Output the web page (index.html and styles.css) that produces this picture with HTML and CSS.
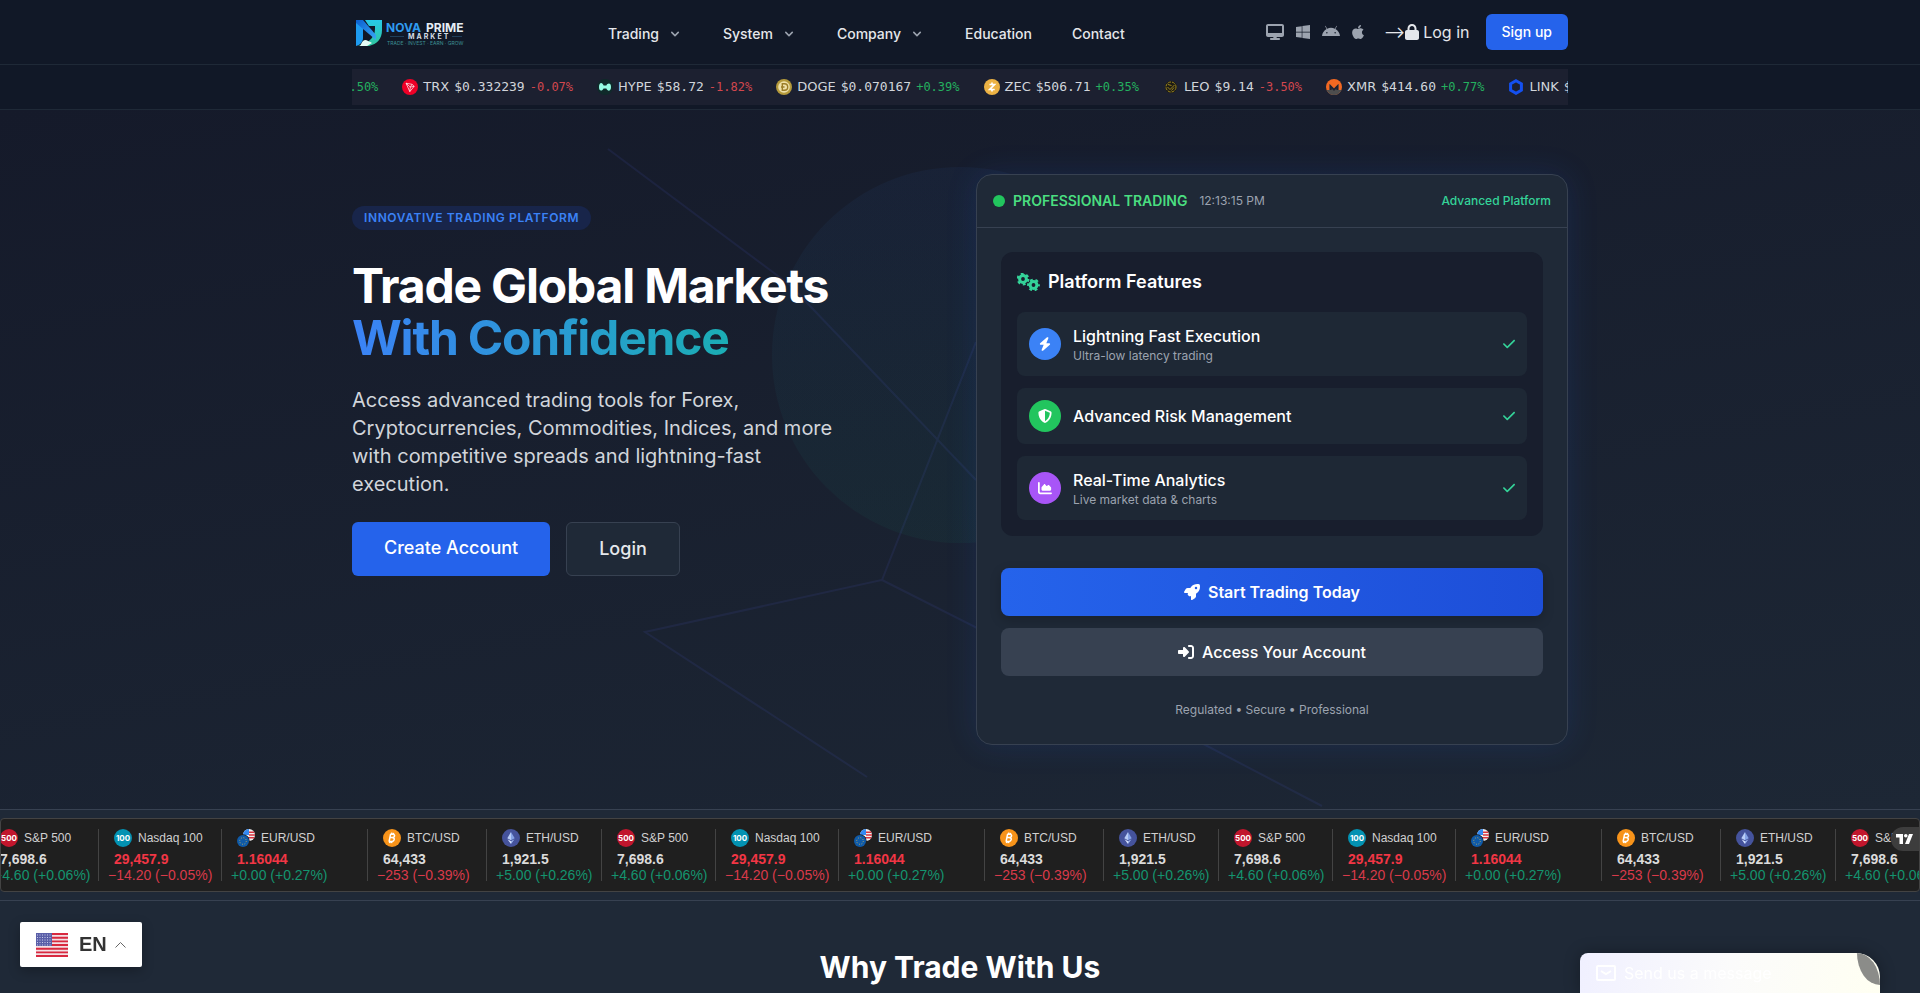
FILE: index.html
```html
<!DOCTYPE html>
<html lang="en">
<head>
  <meta charset="UTF-8" />
  <meta name="viewport" content="width=device-width, initial-scale=1.0"/>
  <title>Nova Prime Market</title>
  <link rel="stylesheet" href="styles.css">
</head>
<body>
  <!-- Shared icons -->
  <svg class="sprite" aria-hidden="true">
    <symbol id="chevron" viewBox="0 0 20 20"><path d="M5.3 7.3a1 1 0 0 1 1.4 0L10 10.6l3.3-3.3a1 1 0 1 1 1.4 1.4l-4 4a1 1 0 0 1-1.4 0l-4-4a1 1 0 0 1 0-1.4z"/></symbol>
    <symbol id="check" viewBox="0 0 448 512"><path d="M438.6 105.4c12.5 12.5 12.5 32.8 0 45.3l-256 256c-12.5 12.5-32.8 12.5-45.3 0l-128-128c-12.5-12.5-12.5-32.8 0-45.3s32.8-12.5 45.3 0L160 338.7 393.4 105.4c12.5-12.5 32.8-12.5 45.3 0z"/></symbol>

    <symbol id="coin-trx" viewBox="0 0 16 16"><circle cx="8" cy="8" r="8" fill="#ef0027"/><path d="M4 4.2l6 1.1 2.2 2-4.4 5.3zM4 4.2l4.3 3.9 3.9-.8M8.3 8.1l-.5 4.5M8.3 8.1L10 5.3" fill="none" stroke="#fff" stroke-width=".7" stroke-linejoin="round"/></symbol>
    <symbol id="coin-hype" viewBox="0 0 16 16"><rect width="16" height="16" rx="8" fill="#0f2a2a"/><path d="M2 8c0-5 3.5-5.2 4.6-1.5h2.8C10.5 4 14 3.5 14 8s-3.5 4.7-4.6 1.5H6.6C5.5 12 2 13 2 8z" fill="#97fce4"/></symbol>
    <symbol id="coin-doge" viewBox="0 0 16 16"><circle cx="8" cy="8" r="8" fill="#b59a3b"/><circle cx="8" cy="8" r="5.8" fill="#eee0a8"/><path d="M6.3 4.8h2.2a3.2 3.2 0 0 1 0 6.4H6.3zM5 8h3.5" fill="none" stroke="#9b7d28" stroke-width="1.4"/></symbol>
    <symbol id="coin-zec" viewBox="0 0 16 16"><circle cx="8" cy="8" r="8" fill="#ecb244"/><path d="M5.5 5.5h5L5.7 10.5h5M8 3.5v2M8 10.5v2" fill="none" stroke="#fff" stroke-width="1.7"/></symbol>
    <symbol id="coin-leo" viewBox="0 0 16 16"><circle cx="8" cy="8" r="6" fill="#1c1b14"/><g fill="none" stroke="#a8901f" stroke-width=".9"><circle cx="8" cy="8" r="5" stroke-dasharray="3 1"/><path d="M4.5 8l2.5 2.5 4.5-4.5M5 5.5l3.5 1M8.5 11.5l2.5-3"/></g></symbol>
    <symbol id="coin-xmr" viewBox="0 0 16 16"><circle cx="8" cy="8" r="8" fill="#f26822"/><path d="M.6 11h3V5l4.4 4.4L12.4 5v6h3A8 8 0 0 1 .6 11z" fill="#4d4d4d"/><path d="M3.6 11V5l4.4 4.4L12.4 5v6h-2V9.5L8 12 5.6 9.5V11z" fill="#1f2130"/></symbol>
    <symbol id="coin-link" viewBox="0 0 16 16"><path d="M8 1.7l5.4 3.1v6.4L8 14.3l-5.4-3.1V4.8z" fill="none" stroke="#1450f0" stroke-width="3"/></symbol>

    <symbol id="sym-btc" viewBox="0 0 18 18"><circle cx="9" cy="9" r="9" fill="#f7931a"/><path d="M7.6 5.2l-1.5 7.3M7.3 5.3h2.6c2.4 0 2.2 3.2-.3 3.3H7M9.5 8.7c2.7 0 2.2 3.7-.8 3.7H5.6M8.8 3.6l-.3 1.5M10.6 3.8l-.3 1.5M7 12.8l-.3 1.4M8.8 12.8l-.3 1.4" fill="none" stroke="#fff" stroke-width="1.5"/></symbol>
    <symbol id="sym-eth" viewBox="0 0 18 18"><circle cx="9" cy="9" r="9" fill="#45539c"/><path d="M9 3L5.3 9.2 9 11.3z" fill="#b9cdf7"/><path d="M9 3l3.7 6.2L9 11.3z" fill="#86a3e6"/><path d="M9 12.2L5.5 10.2 9 15z" fill="#dbe6ff"/><path d="M9 12.2l3.5-2L9 15z" fill="#9fb8f0"/></symbol>
    <symbol id="sym-eur" viewBox="0 0 18 18"><circle cx="12" cy="6" r="6" fill="#f0f0f0"/><path d="M12 3.2h5.3M12 6h6M6.7 8.8h10.6" stroke="#d8343f" stroke-width="1.6"/><path d="M12 0v6H6a6 6 0 0 1 6-6z" fill="#338af3"/><circle cx="6" cy="12" r="6.7" fill="#1f1f1f"/><circle cx="6" cy="12" r="6" fill="#0f5aa8"/><circle cx="6" cy="12" r="3.3" fill="none" stroke="#d9b94a" stroke-width=".9" stroke-dasharray=".9 1.7"/></symbol>
  </svg>

  <header class="header">
    <div class="container header-row">
      <a class="logo" href="#" aria-label="Nova Prime Market">
        <svg width="115" height="40" viewBox="0 0 115 40">
          <defs>
            <linearGradient id="lg-blue" x1="0" y1="0" x2="1" y2="1"><stop offset="0" stop-color="#0a5fd0"/><stop offset="1" stop-color="#39a8f5"/></linearGradient>
            <linearGradient id="lg-teal" x1="0" y1="0" x2="0" y2="1"><stop offset="0" stop-color="#27c9e8"/><stop offset="1" stop-color="#2fc59d"/></linearGradient>
          </defs>
          <path d="M13 8h17v10c0 9-5 14-13 16H6c8-2 17-7 17-17v-3h-6z" fill="url(#lg-teal)"/>
          <path d="M4 8l7 6v12c0 4-3 7-7 8z" fill="#1d9bf0"/>
          <path d="M4 8h7l13 15v5L4 11z" fill="url(#lg-blue)"/>
          <path d="M8 34c2-4 3-6 5-6s5 2 7 3l-5 3z" fill="#e4fbf5"/>
          <text class="logo-nova" x="34" y="20">NOVA</text>
          <text class="logo-prime" x="74" y="20">PRIME</text>
          <text class="logo-market" x="56" y="27">MARKET</text>
          <path d="M38 24.5h14M100 24.5h10" stroke="#2a5a80" stroke-width=".6"/>
          <text class="logo-tag" x="35" y="33">TRADE · INVEST · EARN · GROW</text>
        </svg>
      </a>
      <nav class="nav">
        <a href="#">Trading <svg><use href="#chevron"/></svg></a>
        <a href="#">System <svg><use href="#chevron"/></svg></a>
        <a href="#">Company <svg><use href="#chevron"/></svg></a>
        <a href="#">Education</a>
        <a href="#">Contact</a>
      </nav>
      <div class="header-actions">
        <div class="platforms">
          <a href="#" aria-label="Desktop"><svg width="18" height="16" viewBox="0 0 576 512"><path d="M64 0C28.7 0 0 28.7 0 64V352c0 35.3 28.7 64 64 64H240l-10.7 32H160c-17.7 0-32 14.3-32 32s14.3 32 32 32H416c17.7 0 32-14.3 32-32s-14.3-32-32-32H346.7L336 416H512c35.3 0 64-28.7 64-64V64c0-35.3-28.7-64-64-64H64zM512 64V288H64V64H512z"/></svg></a>
          <a href="#" aria-label="Windows"><svg width="14" height="16" viewBox="0 0 448 512"><path d="M0 93.7l183.6-25.3v177.4H0V93.7zm0 324.6l183.6 25.3V268.4H0v149.9zm203.8 28L448 480V268.4H203.8v177.9zm0-380.6v180.1H448V32L203.8 65.7z"/></svg></a>
          <a href="#" aria-label="Android"><svg width="18" height="16" viewBox="0 0 576 512"><path d="M420.6 301.9a24 24 0 1 1 24-24 24 24 0 0 1-24 24m-265.1 0a24 24 0 1 1 24-24 24 24 0 0 1-24 24m273.7-144.5 47.9-83a10 10 0 1 0-17.3-10l-48.5 84.1a301.3 301.3 0 0 0-246.6 0L116.2 64.4a10 10 0 1 0-17.3 10l47.9 83C64.5 202.2 8.2 285.6 0 384H576c-8.2-98.4-64.5-181.8-146.8-226.6"/></svg></a>
          <a href="#" aria-label="Apple"><svg width="12" height="16" viewBox="0 0 384 512"><path d="M318.7 268.7c-.2-36.7 16.4-64.4 50-84.8-18.8-26.9-47.2-41.7-84.7-44.6-35.5-2.8-74.3 20.7-88.5 20.7-15 0-49.4-19.7-76.4-19.7C63.3 141.2 4 184.8 4 273.5q0 39.3 14.4 81.2c12.8 36.7 59 126.7 107.2 125.2 25.2-.6 43-17.9 75.8-17.9 31.8 0 48.3 17.9 76.4 17.9 48.6-.7 90.4-82.5 102.6-119.3-65.2-30.7-61.7-90-61.7-91.9zm-56.6-164.2c27.3-32.4 24.8-61.9 24-72.5-24.1 1.4-52 16.4-67.9 34.9-17.5 19.8-27.8 44.3-25.6 71.9 26.1 2 49.9-11.4 69.5-34.3z"/></svg></a>
        </div>
        <div class="login">
          <span>--&gt;</span>
          <a href="#"><svg width="14" height="16" viewBox="0 0 448 512"><path d="M144 144v48H304V144c0-44.2-35.8-80-80-80s-80 35.8-80 80zM80 192V144C80 64.5 144.5 0 224 0s144 64.5 144 144v48h16c35.3 0 64 28.7 64 64V448c0 35.3-28.7 64-64 64H64c-35.3 0-64-28.7-64-64V256c0-35.3 28.7-64 64-64H80z"/></svg>Log in</a>
        </div>
        <a class="signup" href="#">Sign up</a>
      </div>
    </div>
  </header>

  <div class="ticker">
    <div class="container">
      <div class="ticker-window">
        <div class="ticker-track" id="ticker"></div>
      </div>
    </div>
  </div>

  <main>
    <section class="hero">
      <svg class="hero-lines" viewBox="0 0 1920 699" preserveAspectRatio="xMidYMid slice" aria-hidden="true">
        <path d="M608 39L790 175 976 370M976 232L882 470 645 522 867 667M882 470L1100 580 1322 696"/>
      </svg>
      <div class="hero-orb"></div>
      <div class="container hero-grid">
        <div class="hero-copy">
          <span class="badge">INNOVATIVE TRADING PLATFORM</span>
          <h1>Trade Global Markets <span>With Confidence</span></h1>
          <p>Access advanced trading tools for Forex, Cryptocurrencies, Commodities, Indices, and more with competitive spreads and lightning-fast execution.</p>
          <div class="hero-buttons">
            <a class="btn-create" href="#">Create Account</a>
            <a class="btn-login" href="#">Login</a>
          </div>
        </div>

        <div class="card">
          <div class="card-head">
            <span class="dot"></span>
            <span class="card-status">PROFESSIONAL TRADING</span>
            <span class="card-time">12:13:15 PM</span>
            <span class="card-plan">Advanced Platform</span>
          </div>
          <div class="card-body">
            <div class="panel">
              <h2>
                <svg width="23" height="18" viewBox="0 0 23 18" fill="none" stroke="currentColor">
                  <circle cx="6" cy="6" r="3.4" stroke-width="3"/>
                  <circle cx="6" cy="6" r="5.2" stroke-width="2.4" stroke-dasharray="2.72 2.72"/>
                  <circle cx="16.5" cy="12" r="3.4" stroke-width="3"/>
                  <circle cx="16.5" cy="12" r="5.2" stroke-width="2.4" stroke-dasharray="2.72 2.72" stroke-dashoffset="1.36"/>
                </svg>
                Platform Features
              </h2>
              <ul>
                <li>
                  <span class="feature-icon blue"><svg width="12" height="14" viewBox="0 0 448 512"><path d="M349.4 44.6c5.9-13.7 1.5-29.7-10.6-38.5s-28.6-8-39.9 1.8l-256 224c-10 8.8-13.6 22.9-8.9 35.3S50.7 288 64 288H175.5L98.6 467.4c-5.9 13.7-1.5 29.7 10.6 38.5s28.6 8 39.9-1.8l256-224c10-8.8 13.6-22.9 8.9-35.3s-16.6-20.7-30-20.7H272.5L349.4 44.6z"/></svg></span>
                  <div><strong>Lightning Fast Execution</strong><small>Ultra-low latency trading</small></div>
                  <svg class="tick"><use href="#check"/></svg>
                </li>
                <li>
                  <span class="feature-icon green"><svg width="14" height="14" viewBox="0 0 512 512"><path d="M256 0c4.6 0 9.2 1 13.4 2.9L457.7 82.8c22 9.3 38.4 31 38.3 57.2c-.5 99.2-41.3 280.7-213.6 363.2c-16.7 8-36.1 8-52.8 0C57.3 420.7 16.5 239.2 16 140c-.1-26.2 16.3-47.9 38.3-57.2L242.7 2.9C246.8 1 251.4 0 256 0zm0 66.8V444.8C394 378 431.1 230.1 432 141.4L256 66.8z"/></svg></span>
                  <div><strong>Advanced Risk Management</strong></div>
                  <svg class="tick"><use href="#check"/></svg>
                </li>
                <li>
                  <span class="feature-icon purple"><svg width="14" height="14" viewBox="0 0 512 512"><path d="M64 64c0-17.7-14.3-32-32-32S0 46.3 0 64V400c0 44.2 35.8 80 80 80H480c17.7 0 32-14.3 32-32s-14.3-32-32-32H80c-8.8 0-16-7.2-16-16V64zm96 288H448c17.7 0 32-14.3 32-32V251.8c0-7.6-2.7-15-7.7-20.8l-65.8-76.8c-12.1-14.2-33.7-15-46.9-1.8l-21 21c-10 10-26.4 9.2-35.4-1.6l-39.2-47c-12.6-15.1-35.7-15.4-48.7-.6L135.9 215c-5.1 5.8-7.9 13.3-7.9 21.1v84c0 17.7 14.3 32 32 32z"/></svg></span>
                  <div><strong>Real-Time Analytics</strong><small>Live market data &amp; charts</small></div>
                  <svg class="tick"><use href="#check"/></svg>
                </li>
              </ul>
            </div>
            <a class="btn-wide btn-start" href="#"><svg width="16" height="16" viewBox="0 0 512 512"><path d="M156.6 384.9L125.7 354c-8.5-8.5-11.5-20.8-7.7-32.2c3-8.9 7-20.5 11.8-33.8L24 288c-8.6 0-16.6-4.6-20.9-12.1s-4.2-16.7 .2-24.1l52.5-88.5c13-21.9 36.5-35.3 61.9-35.3l82.3 0c2.4-4 4.8-7.7 7.2-11.3C289.1-4.1 411.1-8.1 483.9 5.3c11.6 2.1 20.6 11.2 22.8 22.8c13.4 72.9 9.3 194.8-111.4 276.7c-3.5 2.4-7.3 4.8-11.3 7.2v82.3c0 25.4-13.4 49-35.3 61.9l-88.5 52.5c-7.4 4.4-16.6 4.5-24.1 .2s-12.1-12.2-12.1-20.9V380.8c-14.1 4.9-26.4 8.9-35.7 11.9c-11.2 3.6-23.4 .5-31.8-7.8zM384 168a40 40 0 1 0 0-80 40 40 0 1 0 0 80z"/></svg>Start Trading Today</a>
            <a class="btn-wide btn-access" href="#"><svg width="16" height="16" viewBox="0 0 512 512"><path d="M217.9 105.9L340.7 228.7c7.2 7.2 11.3 17.1 11.3 27.3s-4.1 20.1-11.3 27.3L217.9 406.1c-6.4 6.4-15 9.9-24 9.9c-18.7 0-33.9-15.2-33.9-33.9l0-62.1L32 320c-17.7 0-32-14.3-32-32l0-64c0-17.7 14.3-32 32-32l128 0 0-62.1c0-18.7 15.2-33.9 33.9-33.9c9 0 17.6 3.6 24 9.9zM352 416l64 0c17.7 0 32-14.3 32-32l0-256c0-17.7-14.3-32-32-32l-64 0c-17.7 0-32-14.3-32-32s14.3-32 32-32l64 0c53 0 96 43 96 96l0 256c0 53-43 96-96 96l-64 0c-17.7 0-32-14.3-32-32s14.3-32 32-32z"/></svg>Access Your Account</a>
            <p class="card-note">Regulated • Secure • Professional</p>
          </div>
        </div>
      </div>
    </section>

    <section class="quotes">
      <div class="quotes-box">
        <div class="quotes-track" id="quotes"></div>
        <a class="tv-badge" href="#" aria-label="TradingView">
          <svg width="17" height="10" viewBox="0 0 17 10"><path d="M0 0h7v10H3.5V3.5H0zM13 0h4l-4 10H9z"/><circle cx="9.8" cy="1.8" r="1.8"/></svg>
        </a>
      </div>
    </section>

    <section class="why">
      <h2>Why Trade With Us</h2>
    </section>
  </main>

  <button class="lang" type="button">
    <svg width="32" height="24" viewBox="0 0 32 24" aria-hidden="true">
      <rect width="32" height="24" fill="#f3dfe4"/>
      <path d="M0 1h32M0 4.7h32M0 8.4h32M0 12h32M0 15.7h32M0 19.4h32M0 23h32" stroke="#d8293f" stroke-width="1.9"/>
      <rect width="16" height="13" fill="#5a5fa8"/>
      <path d="M1 2h15M1 4.5h15M1 7h15M1 9.5h15M1 12h15" stroke="#c8cbe8" stroke-width="1" stroke-dasharray="1 1.5"/>
    </svg>
    <span>EN</span>
    <svg class="lang-arrow" width="11" height="8" viewBox="0 0 11 8" aria-hidden="true"><path d="M.5 6.5l5-5 5 5"/></svg>
  </button>

  <div class="message">
    <svg width="20" height="16" viewBox="0 0 20 16" aria-hidden="true"><rect x="1" y="1" width="18" height="14" rx="1"/><path d="M5 6l5 3 5-3"/></svg>
    <span>Send us a message</span>
    <i class="message-corner"></i>
  </div>

  <script src="script.js"></script>
</body>
</html>
```

FILE: styles.css
```css
* { box-sizing: border-box; margin: 0; padding: 0; }
body { font-family: Inter, sans-serif; font-size: 16px; line-height: 24px; background: #1f2937; color: #e5e7eb; overflow-x: hidden; }
a { color: inherit; text-decoration: none; }
ul { list-style: none; }
svg { display: block; flex: none; fill: currentColor; }
.sprite { position: absolute; width: 0; height: 0; }
.container { max-width: 1280px; margin: 0 auto; padding: 0 32px; }

/* header */
.header { background: #111827; border-bottom: 1px solid #1f2937; }
.header-row { height: 64px; display: flex; align-items: center; justify-content: space-between; }
.logo-nova, .logo-prime { font-size: 12px; font-weight: 700; fill: #2f9bf0; }
.logo-prime { fill: #e6eef5; }
.logo-market { font-size: 7px; font-weight: 700; fill: #d5dde5; letter-spacing: 2px; }
.logo-tag { font-size: 5px; fill: #3d8f93; }
.nav { display: flex; gap: 40px; font-size: 14px; font-weight: 500; line-height: 20px; padding-top: 4px; }
.nav a { display: flex; align-items: center; gap: 8px; }
.nav svg { width: 16px; height: 16px; color: #9ca3af; }
.header-actions { display: flex; align-items: center; }
.platforms { display: flex; gap: 12px; color: #9ca3af; margin-right: 20px; }
.login { display: flex; margin-right: 16px; }
.login a { display: flex; align-items: center; gap: 4px; }
.signup { background: #2563eb; color: #fff; font-size: 14px; font-weight: 500; line-height: 20px; padding: 8px 16px; border-radius: 6px; }

/* crypto ticker */
.ticker { background: #111827; padding: 4px 0; border-bottom: 1px solid #1f2937; }
.ticker-window { height: 36px; overflow: hidden; background: #1c2030; display: flex; align-items: center; }
.ticker-track { display: flex; gap: 24px; margin-left: -17px; }
.coin { display: flex; align-items: center; gap: 5px; flex: none; font-family: "DejaVu Sans", sans-serif; font-size: 13px; color: #d1d5db; white-space: nowrap; }
.coin svg { width: 16px; height: 16px; }
.coin .price, .coin .pct { font-family: "DejaVu Sans Mono", monospace; }
.coin .pct { font-size: 12px; }
.coin .up { color: #24b05f; }
.coin .down { color: #d2474e; }

/* hero */
.hero { position: relative; overflow: hidden; background: linear-gradient(170deg, #151a2a, #1d2735); padding: 64px 0; }
.hero-lines { position: absolute; inset: 0; width: 100%; height: 100%; fill: none; stroke: #4f5bd5; stroke-width: 2; opacity: .11; }
.hero-orb { position: absolute; left: 50%; top: 50%; width: 376px; height: 376px; margin: -293px 0 0 -188px; border-radius: 50%; background: linear-gradient(#3b82f6, #10b981); opacity: .05; }
.hero-grid { position: relative; display: grid; grid-template-columns: 1fr 1fr; gap: 32px; }
.hero-copy { padding-top: 32px; }
.badge { display: block; width: fit-content; padding: 4px 12px; border-radius: 12px; background: #18254a; color: #3b82f6; font-size: 12px; font-weight: 600; line-height: 16px; letter-spacing: .05em; }
h1 { margin-top: 30px; font-size: 48px; font-weight: 700; line-height: 52px; letter-spacing: -.025em; color: #fff; }
h1 span { display: block; color: transparent; background: linear-gradient(90deg, #3b82f6, #14b8a6 460px); background-clip: text; -webkit-background-clip: text; }
.hero-copy p { max-width: 500px; margin: 22px 0 24px; font-size: 20px; line-height: 28px; color: #d1d5db; }
.hero-buttons { display: flex; gap: 16px; font-size: 18px; font-weight: 500; line-height: 28px; }
.hero-buttons a { padding: 12px 32px; border-radius: 6px; }
.btn-create { background: #2563eb; color: #fff; }
.btn-login { background: #1f2937; border: 1px solid #374151; }

.card { border: 1px solid #374151; border-radius: 16px; background: #1f2937; box-shadow: 0 0 32px rgba(37, 99, 235, .14); }
.card-head { display: flex; align-items: center; padding: 16px; border-bottom: 1px solid #374151; font-size: 12px; line-height: 20px; }
.dot { width: 12px; height: 12px; border-radius: 50%; background: #22c55e; }
.card-status { margin: 0 12px 0 8px; font-size: 14px; font-weight: 600; color: #4ade80; }
.card-time { color: #9ca3af; }
.card-plan { margin-left: auto; font-weight: 500; color: #34d399; }
.card-body { padding: 24px; }
.panel { padding: 16px; border-radius: 12px; background: #181e2d; margin-bottom: 32px; }
.panel h2 { display: flex; align-items: center; gap: 8px; font-size: 18px; font-weight: 600; line-height: 28px; color: #fff; margin-bottom: 16px; }
.panel h2 svg { color: #34d399; fill: none; }
.panel ul { display: grid; gap: 12px; }
.panel li { display: flex; align-items: center; gap: 12px; padding: 12px; border-radius: 8px; background: #1e2835; }
.feature-icon { width: 32px; height: 32px; border-radius: 50%; display: flex; align-items: center; justify-content: center; color: #fff; }
.blue { background: #3b82f6; }
.green { background: #22c55e; }
.purple { background: #a855f7; }
.panel strong { display: block; font-weight: 500; color: #fff; }
.panel small { display: block; font-size: 12px; line-height: 16px; color: #9ca3af; }
.tick { width: 12px; height: 14px; margin-left: auto; color: #34d399; }
.btn-wide { display: flex; align-items: center; justify-content: center; gap: 8px; padding: 12px; border-radius: 8px; color: #fff; }
.btn-start { font-weight: 600; background: linear-gradient(90deg, #2563eb, #1d4ed8); box-shadow: 0 4px 12px rgba(0, 0, 0, .2); margin-bottom: 12px; }
.btn-access { font-weight: 500; background: #374151; }
.card-note { margin-top: 24px; text-align: center; font-size: 12px; line-height: 20px; color: #9ca3af; }

/* market quotes */
.quotes { padding: 8px 0; border-top: 1px solid #374151; border-bottom: 1px solid #374151; }
.quotes-box { position: relative; height: 74px; overflow: hidden; border: 1px solid #434343; border-radius: 4px; background: #1f1f1f; font-family: "Liberation Sans", Arial, sans-serif; font-size: 14px; line-height: 16px; color: #dbdbdb; }
.quotes-track { display: flex; margin-left: -16px; padding-top: 10px; }
.quote { flex: none; height: 52px; padding-left: 9px; border-right: 1px solid #434343; white-space: nowrap; }
.quote-btc { width: 119px; }
.quote-eth { width: 115px; }
.quote-spx { width: 114px; }
.quote-ndx { width: 123px; }
.quote-eur { width: 146px; }
.quote-name { display: flex; align-items: center; gap: 6px; height: 18px; padding-left: 6px; font-size: 12px; color: #d1d1d1; margin-bottom: 4px; }
.quote-name svg { width: 18px; height: 18px; }
.num { width: 18px; border-radius: 50%; background: #c1162d; color: #fff; font: bold 8px/18px Inter, sans-serif; text-align: center; }
.quote-ndx .num { background: #0392b2; }
.quote-last { padding-left: 6px; font-weight: bold; }
.quote .red { color: #f23645; }
.quote .up { color: #14946f; }
.quote .down { color: #d93a4a; }
.tv-badge { position: absolute; right: 0; top: 8px; width: 28px; height: 24px; padding: 7px 5px; border-radius: 12px 0 0 12px; background: #3d3d3d; color: #fff; }

.why { padding: 48px 32px 8px; text-align: center; }
.why h2 { font-size: 30px; font-weight: 700; line-height: 36px; color: #fff; }

/* floating widgets */
.lang { position: fixed; left: 20px; bottom: 26px; display: flex; align-items: center; gap: 8px; height: 45px; padding: 0 16px; border: 0; border-radius: 2px; background: #fff; color: #333; font: bold 20px "Liberation Sans", Arial, sans-serif; box-shadow: 0 4px 12px rgba(0, 0, 0, .25); cursor: pointer; }
.lang span { margin-left: 3px; }
.lang-arrow { fill: none; stroke: #666; stroke-width: 1; }
.message { position: fixed; right: 40px; bottom: 0; width: 300px; height: 40px; padding: 8px 16px; display: flex; gap: 8px; border-radius: 8px 24px 0 0; overflow: hidden; background: linear-gradient(100deg, #f0f0ff, #fbfbfb 50%, #fffff2); color: #fff; box-shadow: 0 0 16px rgba(0, 0, 0, .3); }
.message svg { fill: none; stroke: #fff; stroke-width: 2; margin-top: 4px; }
.message-corner { position: absolute; right: 0; top: 0; width: 23px; height: 32px; border-radius: 0 100% 0 100%; background: #8b8c89; }
```

FILE: script.js
```js
const coins = [
  ["", "", "", "+0.50%"],
  ["trx", "TRX", "$0.332239", "-0.07%"],
  ["hype", "HYPE", "$58.72", "-1.82%"],
  ["doge", "DOGE", "$0.070167", "+0.39%"],
  ["zec", "ZEC", "$506.71", "+0.35%"],
  ["leo", "LEO", "$9.14", "-3.50%"],
  ["xmr", "XMR", "$414.60", "+0.77%"],
  ["link", "LINK", "$", ""]
];

const symbols = {
  btc: ["BTC/USD", "64,433", "−253 (−0.39%)", ""],
  eth: ["ETH/USD", "1,921.5", "+5.00 (+0.26%)", ""],
  spx: ["S&amp;P 500", "7,698.6", "+4.60 (+0.06%)", ""],
  ndx: ["Nasdaq 100", "29,457.9", "−14.20 (−0.05%)", "red"],
  eur: ["EUR/USD", "1.16044", "+0.00 (+0.27%)", "red"]
};
const indexNumbers = { spx: 500, ndx: 100 };

const dir = (text) => (text[0] === "+" ? "up" : "down");

document.getElementById("ticker").innerHTML = coins.map(([id, name, price, pct]) => `
  <div class="coin">
    ${id ? `<svg><use href="#coin-${id}"/></svg><span>${name}</span><span class="price">${price}</span>` : ""}
    ${pct ? `<span class="pct ${dir(pct)}">${pct}</span>` : ""}
  </div>`).join("");

// the strip loops through the same five symbols, starting mid-cycle
const order = ["btc", "eth", "spx", "ndx", "eur"];
let html = "";
for (let i = 2; i < 18; i++) {
  const id = order[i % 5];
  const [name, last, change, color] = symbols[id];
  const icon = indexNumbers[id]
    ? `<span class="num">${indexNumbers[id]}</span>`
    : `<svg><use href="#sym-${id}"/></svg>`;
  html += `
  <div class="quote quote-${id}">
    <div class="quote-name">${icon}${name}</div>
    <div class="quote-last ${color}">${last}</div>
    <div class="${dir(change)}">${change}</div>
  </div>`;
}
document.getElementById("quotes").innerHTML = html;
```
